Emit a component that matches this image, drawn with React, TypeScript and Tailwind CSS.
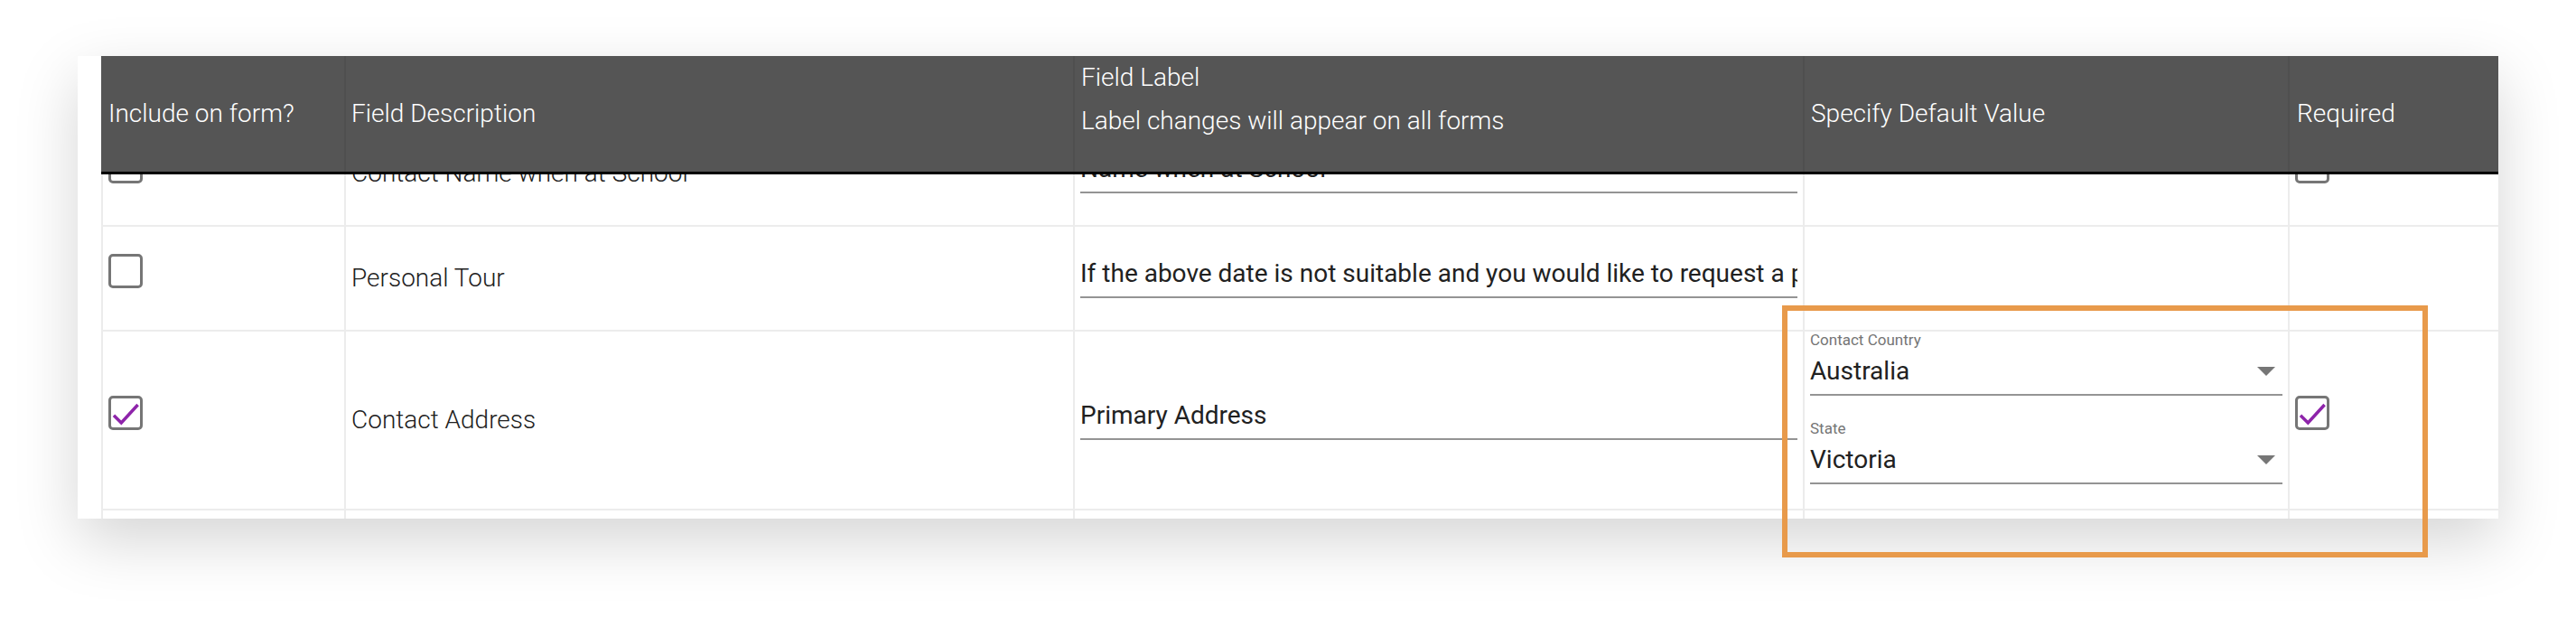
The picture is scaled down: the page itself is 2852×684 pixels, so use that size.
import React from "react"

const Checkbox = ({ checked }: { checked?: boolean }) => (
  <div className="mb-[16px] flex h-[38px] w-[38px] shrink-0 rounded-[5px] border-[3px] border-[#767676] bg-white">
    {checked && (
      <svg viewBox="0 0 32 32" className="h-full w-full">
        <path d="M3 18.7 L11.3 27 L29.6 7" fill="none" stroke="#8e24aa" strokeWidth="3.5" />
      </svg>
    )}
  </div>
)

const Caret = () => (
  <svg viewBox="0 0 20 10" className="mr-[8px] h-[10px] w-[20px]">
    <polygon points="0,0 20,0 10,10" fill="#767676" />
  </svg>
)

const SelectField = ({ label, value }: { label: string; value: string }) => (
  <div className="flex flex-col">
    <div className="text-[17px] leading-[18px] text-[#757575]">{label}</div>
    <div className="flex h-[53px] items-center justify-between border-b-2 border-[#949494] text-[28px] text-[#212121]">
      <span>{value}</span>
      <Caret />
    </div>
  </div>
)

type Row = {
  include: boolean
  desc: string
  label: string
  required: boolean | null
  defaults?: boolean
}

const rows: Row[] = [
  { include: false, desc: "Contact Name when at School", label: "Name when at School", required: false },
  {
    include: false,
    desc: "Personal Tour",
    label: "If the above date is not suitable and you would like to request a personal tour, please let us know",
    required: null,
  },
  { include: true, desc: "Contact Address", label: "Primary Address", required: true, defaults: true },
]

export default function App() {
  return (
    <div className="relative h-[684px] w-[2852px] overflow-hidden bg-white pl-[86px] pt-[62px] font-['Roboto','Liberation_Sans',sans-serif]">
      <div className="h-[512px] w-[2680px] overflow-hidden bg-white pl-[26px] shadow-[0_24px_64px_rgba(0,0,0,0.17)]">
        {/* header */}
        <div className="relative z-10 flex h-[131px] border-b-[3px] border-black bg-[#555555] text-[28px] font-light text-white">
          <div className="flex w-[269px] shrink-0 items-center px-[8px]">Include on form?</div>
          <div className="flex w-[807px] shrink-0 items-center border-l-2 border-[#4f4f4f] px-[6px]">Field Description</div>
          <div className="flex w-[808px] shrink-0 flex-col border-l-2 border-[#4f4f4f] px-[7px] leading-[48px]">
            <span>Field Label</span>
            <span>Label changes will appear on all forms</span>
          </div>
          <div className="flex w-[537px] shrink-0 items-center border-l-2 border-[#4f4f4f] px-[7px]">Specify Default Value</div>
          <div className="flex w-[233px] shrink-0 items-center border-l-2 border-[#4f4f4f] px-[8px]">Required</div>
        </div>

        {/* body, scrolled under the header */}
        <div className="-mt-[58px]">
          {rows.map((r) => (
            <div
              key={r.desc}
              className={`flex border-b-2 border-[#ececec] ${r.defaults ? "h-[198px]" : "h-[116px]"}`}
            >
              <div className="flex w-[269px] shrink-0 items-center border-l-2 border-[#ececec] px-[6px]">
                <Checkbox checked={r.include} />
              </div>
              <div className="flex w-[807px] shrink-0 items-center border-l-2 border-[#ececec] px-[6px] text-[28px] font-light text-[#212121]">
                {r.desc}
              </div>
              <div className="flex w-[808px] shrink-0 items-center border-l-2 border-[#ececec] px-[6px]">
                <input
                  readOnly
                  value={r.label}
                  className="h-[44px] w-full border-b-2 border-[#949494] pb-[10px] text-[28px] text-[#212121] outline-none"
                />
              </div>
              <div className="flex w-[537px] shrink-0 flex-col border-l-2 border-[#ececec] px-[6px]">
                {r.defaults && (
                  <>
                    <SelectField label="Contact Country" value="Australia" />
                    <div className="mt-[27px]">
                      <SelectField label="State" value="Victoria" />
                    </div>
                  </>
                )}
              </div>
              <div className="flex w-[233px] shrink-0 items-center border-l-2 border-[#ececec] px-[6px]">
                {r.required !== null && <Checkbox checked={r.required} />}
              </div>
            </div>
          ))}
          <div className="flex h-[60px]">
            <div className="w-[269px] shrink-0 border-l-2 border-[#ececec]" />
            <div className="w-[807px] shrink-0 border-l-2 border-[#ececec]" />
            <div className="w-[808px] shrink-0 border-l-2 border-[#ececec]" />
            <div className="w-[537px] shrink-0 border-l-2 border-[#ececec]" />
            <div className="w-[233px] shrink-0 border-l-2 border-[#ececec]" />
          </div>
        </div>
      </div>

      {/* highlight annotation */}
      <div className="absolute left-[1973px] top-[338px] h-[279px] w-[715px] border-[6px] border-[#e89a4b]" />
    </div>
  )
}
